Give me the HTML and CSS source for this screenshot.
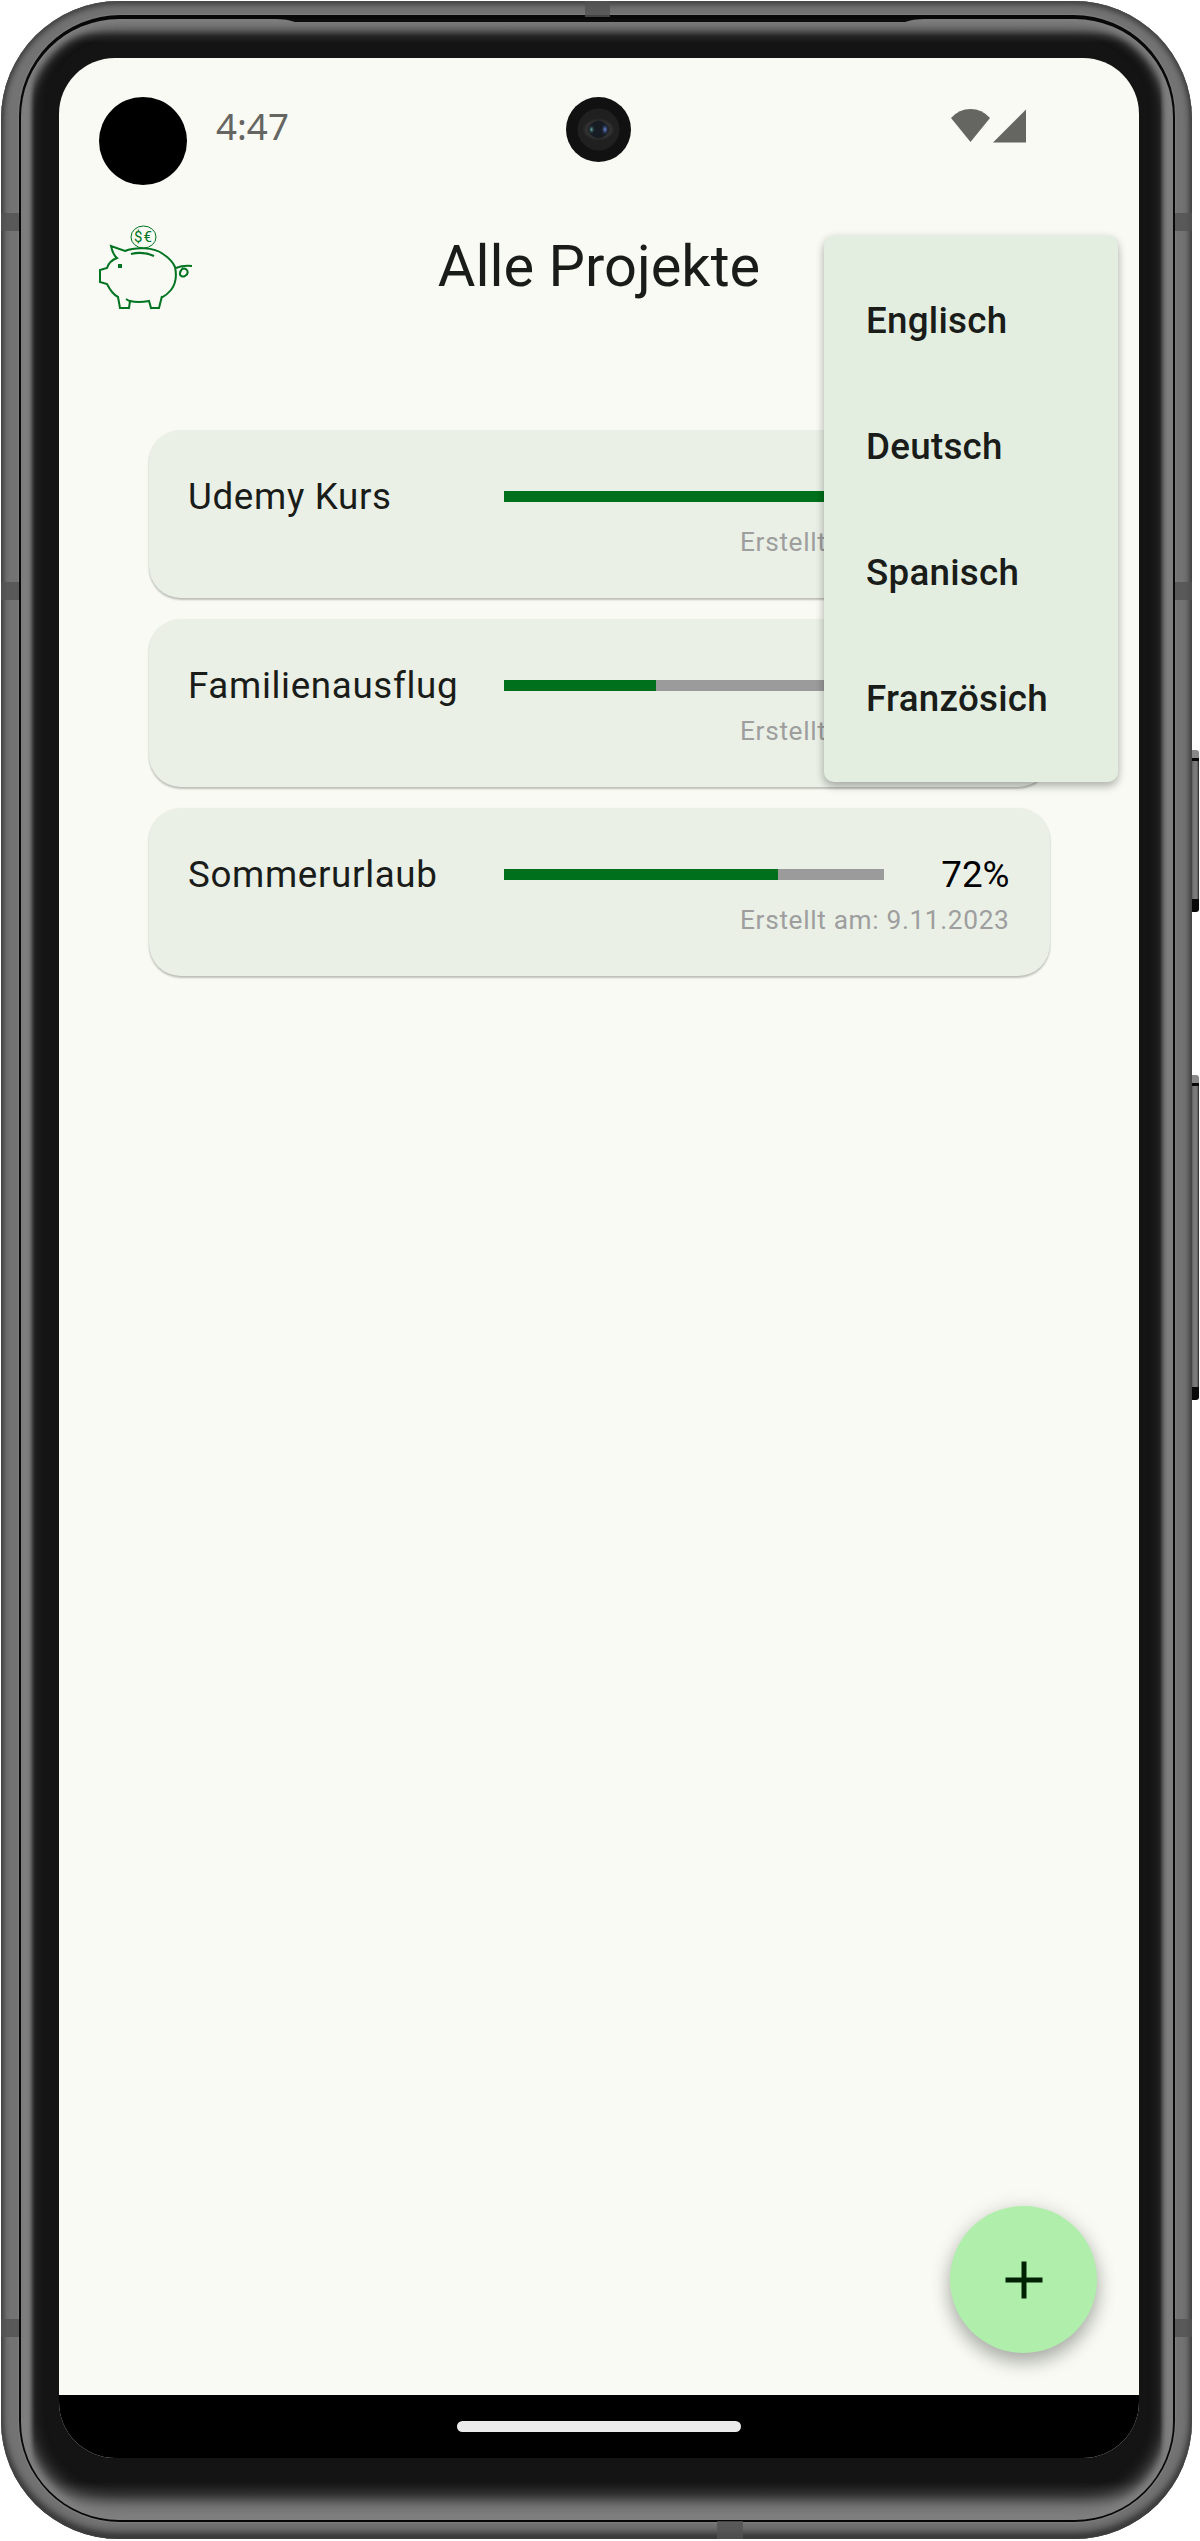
FILE: index.html
```html
<!DOCTYPE html>
<html lang="de">
<head>
<meta charset="utf-8">
<title>Alle Projekte</title>
<link rel="stylesheet" href="styles.css">
</head>
<body>
<div class="device">
  <i class="key power"></i><i class="key volume"></i>
  <div class="rim">
    <i class="band left upper"></i><i class="band left middle"></i><i class="band left lower"></i>
    <i class="band right upper"></i><i class="band right middle"></i><i class="band right lower"></i>
    <i class="band top"></i><i class="band bottom"></i>
    <div class="seam">
      <div class="bezel">
        <svg class="speaker" width="650" height="3" viewBox="0 0 650 3"><path d="M0 0H650Q638 0 630 3H20Q12 0 0 0Z" fill="#0c0c0c"/></svg>
        <div class="screen">
          <header class="status">
            <span class="cutout"></span>
            <span class="time">4:47</span>
            <svg class="signals" width="76" height="34" viewBox="0 0 76 34" fill="#656562"><path d="M0 9Q8 0 19.500 0T39 9L19.500 33Z"/><path d="M42 33.500L75 0.500V33.500Z"/></svg>
            <svg class="camera" width="66" height="66" viewBox="0 0 66 66">
              <defs>
                <radialGradient id="teal"><stop offset="0" stop-color="#62a9a8"/><stop offset="1" stop-color="#17252b" stop-opacity="0"/></radialGradient>
                <radialGradient id="blue"><stop offset="0" stop-color="#6c8ee0"/><stop offset="1" stop-color="#17203a" stop-opacity="0"/></radialGradient>
                <radialGradient id="ring"><stop offset=".55" stop-color="#161719"/><stop offset=".75" stop-color="#343434"/><stop offset="1" stop-color="#202020"/></radialGradient>
              </defs>
              <circle cx="32.500" cy="32.500" r="32.500" fill="#111"/><circle cx="32.500" cy="32.500" r="21" fill="#202020"/>
              <ellipse cx="32.500" cy="32.500" rx="16" ry="11" fill="url(#ring)"/><circle cx="32.500" cy="32.500" r="9" fill="#171c22"/>
              <ellipse cx="25.500" cy="32.500" rx="3.500" ry="5" fill="url(#teal)"/><ellipse cx="39" cy="32.500" rx="4" ry="6" fill="url(#blue)"/>
            </svg>
          </header>
          <div class="appbar">
            <svg class="pig" width="98" height="88" viewBox="0 0 98 88" fill="none" stroke="#007420" stroke-width="2">
              <ellipse cx="46.500" cy="13" rx="12.500" ry="11" stroke-width="1"/>
              <g fill="#007420" stroke="none" class="coin"><text x="37" y="18">$</text><text x="46.500" y="18">€</text></g>
              <path d="M64 74Q70 71 74 66Q81 57 78 43Q75 36 66 30C57 23 38 23 28 27L14 22Q16 31 20 34Q12 37 10 44L3 46V58L10 60Q15 70 21 73L23 84H32L33 77Q41 79 52 77L54 84H62L65 72"/>
              <path d="M34 30Q46 27 57 32M79 44Q86 41 95 42M86 44C80 50 84 54 88 52C93 49 90 43 85 45M29 75L34 78"/>
              <rect x="21" y="40" width="4" height="4" fill="#007420" stroke="none"/>
            </svg>
            <h1>Alle Projekte</h1>
          </div>
          <main class="projects">
            <article class="card">
              <div class="row"><span class="name">Udemy Kurs</span><span class="track"><span class="fill" style="width:100%"></span></span><span class="percent">100%</span></div>
              <div class="created">Erstellt am: 9.11.2023</div>
            </article>
            <article class="card">
              <div class="row"><span class="name">Familienausflug</span><span class="track"><span class="fill" style="width:40%"></span></span><span class="percent">40%</span></div>
              <div class="created">Erstellt am: 9.11.2023</div>
            </article>
            <article class="card">
              <div class="row"><span class="name">Sommerurlaub</span><span class="track"><span class="fill" style="width:72%"></span></span><span class="percent">72%</span></div>
              <div class="created">Erstellt am: 9.11.2023</div>
            </article>
          </main>
          <nav class="navbar"><span class="pill"></span></nav>
          <div class="menu"><span>Englisch</span><span>Deutsch</span><span>Spanisch</span><span>Französich</span></div>
          <button class="fab" aria-label="Neues Projekt"><svg width="38" height="38" viewBox="0 0 38 38"><path d="M19 .5V37.500M.5 19H37.500" stroke="#002204" stroke-width="5"/></svg></button>
        </div>
      </div>
    </div>
  </div>
</div>
</body>
</html>
```
FILE: styles.css
```css
* { box-sizing: border-box; }
body { margin: 0; background: #fff; font-family: Roboto, sans-serif; color: #1a1c19; }
.device { position: relative; width: 1200px; height: 2541px; padding: 1px 8px 2px 1px; overflow: hidden; }

/* metal frame */
.rim {
  position: relative; height: 2538px; padding: 14px 17px 17px 18px; border-radius: 118px;
  background: #737373;
  box-shadow: inset 0 0 4px 1px #444, inset 0 -6px 9px #2c2c2c, inset 0 4px 6px #4c4c4c;
}
.seam { height: 2507px; padding: 4px 2px 2px; border-radius: 101px; background: #080808; box-shadow: 0 0 2px #999; }
.bezel {
  position: relative; height: 2501px; padding: 39px 33px 62px 38px; border-radius: 98px;
  background:
    linear-gradient(90deg, #666, #8f8f8f 4px, #777 8px, #2a2a2a 12px, transparent 14px),
    linear-gradient(270deg, #8f8f8f, #949494 3px, #777 7px, #3c3c3c 11px, transparent 13px),
    linear-gradient(#858585, #5c5c5c 10px, #262626 17px, transparent 24px),
    linear-gradient(0deg, #868686, #6c6c6c 12px, #303030 25px, transparent 38px),
    #141414;
  box-shadow: inset 0 0 7px 4px #808080, inset 0 -8px 18px 4px #7c7c7c, inset 0 4px 12px 2px #6c6c6c;
}
.speaker { position: absolute; left: 254px; top: 0; }
.band { position: absolute; background: rgba(82, 82, 82, .8); }
.left, .right { width: 18px; height: 18px; }
.left { left: 0; }
.right { right: 0; width: 17px; }
.upper { top: 212px; }
.middle { top: 581px; }
.lower { top: 2318px; }
.top { left: 584px; top: 0; width: 25px; height: 16px; }
.bottom { left: 716px; bottom: 0; width: 26px; height: 18px; }
.key { position: absolute; left: 1191px; width: 8px; border-radius: 0 3px 3px 0; background: linear-gradient(#888 0 8px, #080808 8px 11px, transparent 11px calc(100% - 13px), #0a0a0a calc(100% - 13px)), linear-gradient(90deg, #555, #7b7b7b 40% 75%, #222); }
.power { top: 750px; height: 162px; }
.volume { top: 1075px; height: 325px; }

.screen { position: relative; display: flex; flex-direction: column; width: 1080px; height: 2400px; border-radius: 56px; overflow: hidden; background: #f8faf3; }

.status { position: relative; display: flex; flex: none; height: 136px; padding: 39px 112px 0 40px; }
.cutout { width: 88px; height: 88px; border-radius: 50%; background: #000; }
.time { margin: 4px 0 0 29px; font: 36.75px/50px "Noto Sans", sans-serif; color: #656562; }
.signals { margin: 12px 0 0 auto; }
.camera { position: absolute; left: 507px; top: 39px; }

.appbar { position: relative; flex: none; height: 168px; padding-top: 37px; }
.appbar h1 { margin: 0; font-size: 57.750px; line-height: 70px; font-weight: 400; text-align: center; }
.pig { position: absolute; left: 38px; top: 30px; }
.coin { font-size: 15px; font-weight: 400; }

.projects { flex: 1; display: flex; flex-direction: column; gap: 21px; padding: 68px 89.500px 0; }
.card { height: 168px; padding: 40px 40px 0 39.500px; border-radius: 32px; background: #eaf0e6; box-shadow: 0 2px 2px rgba(0,0,0,.2), 0 1px 3px rgba(0,0,0,.08); }
.row { display: flex; align-items: center; height: 53px; font-size: 36.750px; letter-spacing: .656px; }
.name { width: 316px; white-space: nowrap; }
.track { width: 380px; height: 11px; background: #9b9b9b; }
.fill { display: block; height: 100%; background: #00701c; }
.percent { flex: 1; text-align: right; color: #000; letter-spacing: 0; }
.created { margin-top: 1px; font-size: 26.250px; line-height: 36px; letter-spacing: .656px; text-align: right; color: #9e9e9e; }

.navbar { flex: none; display: flex; align-items: center; justify-content: center; height: 63px; background: #000; }
.pill { width: 284px; height: 11px; border-radius: 6px; background: #ebebeb; }

.menu { position: absolute; left: 765px; top: 178px; display: flex; flex-direction: column; width: 294px; padding: 22px 42px 20px; border-radius: 10px; background: #e3eee1; box-shadow: 0 5px 8px rgba(0,0,0,.22), 0 1px 10px rgba(0,0,0,.12); }
.menu span { font-size: 36.750px; font-weight: 500; line-height: 126px; letter-spacing: .260px; }
.fab { position: absolute; left: 891px; top: 2148px; display: flex; align-items: center; justify-content: center; width: 147px; height: 147px; padding: 0; border: 0; border-radius: 50%; background: #b0efab; box-shadow: 0 10px 18px rgba(0,0,0,.25), 0 2px 22px rgba(0,0,0,.12); }
```
